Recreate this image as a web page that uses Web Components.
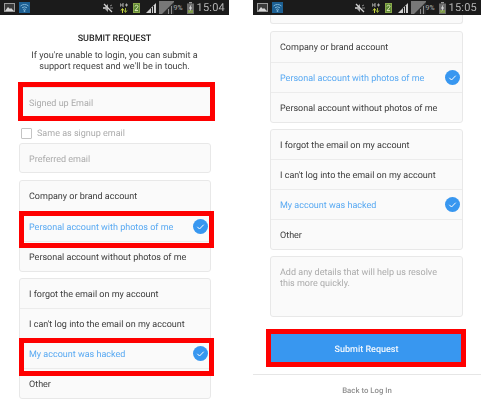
<!DOCTYPE html>
<html>
<head>
<meta charset="utf-8">
<title>Submit Request</title>
<style>
  html, body { margin: 0; padding: 0; background: #fff; }
  body { width: 481px; height: 405px; overflow: hidden; font-family: Roboto, "Liberation Sans", sans-serif; text-rendering: geometricPrecision; }
  .phones { display: flex; height: 405px; }
  phone-panel:first-child { width: 229px; margin-right: 24px; }
  phone-panel:last-child { width: 228px; }
</style>
</head>
<body>
<div class="phones">
  <phone-panel>
    <status-bar time="15:04"></status-bar>
    <form-intro title="SUBMIT REQUEST">If you're unable to login, you can submit a<br>support request and we'll be in touch.</form-intro>
    <red-frame inset="-5px -4px -4px -1px" style="margin:14px 18px 0 19px">
      <text-field height="30">Signed up Email</text-field>
    </red-frame>
    <check-line>Same as signup email</check-line>
    <text-field height="30" style="margin:0 18px 0 19px">Preferred email</text-field>
    <option-card style="margin:7px 18px 0 19px">
      <option-row first>Company or brand account</option-row>
      <red-frame inset="0 -4px -7.400px -1px">
        <option-row selected>Personal account with photos of me</option-row>
      </red-frame>
      <option-row>Personal account without photos of me</option-row>
    </option-card>
    <option-card style="margin:6px 18px 0 19px">
      <option-row first>I forgot the email on my account</option-row>
      <option-row>I can't log into the email on my account</option-row>
      <red-frame inset="0 -4px -7.400px -1px">
        <option-row selected>My account was hacked</option-row>
      </red-frame>
      <option-row>Other</option-row>
    </option-card>
  </phone-panel>
  <phone-panel>
    <status-bar time="15:05"></status-bar>
    <option-card cut style="margin:0 18px 0 17px;height:9px"></option-card>
    <option-card style="margin:7px 18px 0 17px">
      <option-row first>Company or brand account</option-row>
      <option-row selected>Personal account with photos of me</option-row>
      <option-row>Personal account without photos of me</option-row>
    </option-card>
    <option-card style="margin:6px 18px 0 17px">
      <option-row first>I forgot the email on my account</option-row>
      <option-row>I can't log into the email on my account</option-row>
      <option-row selected>My account was hacked</option-row>
      <option-row>Other</option-row>
    </option-card>
    <text-field multiline height="61" style="margin:6px 18px 0 17px">Add any details that will help us resolve<br>this more quickly.</text-field>
    <red-frame inset="-4px -3px -4px -4px" style="margin:16px 18px 0 17px">
      <submit-button>Submit Request</submit-button>
    </red-frame>
    <back-link>Back to Log In</back-link>
  </phone-panel>
</div>

<script>
const FONT = `Roboto, "Liberation Sans", sans-serif`;

class PhonePanel extends HTMLElement {
  constructor() {
    super();
    this.attachShadow({ mode: "open" });
  }

  connectedCallback() {
    this.shadowRoot.innerHTML = `
      <style>
        :host { display: block; height: 405px; overflow: hidden; filter: blur(.3px); }
        .body { display: flex; flex-direction: column; }
      </style>
      <div class="body"><slot></slot></div>
    `;
  }
}

class StatusBar extends HTMLElement {
  constructor() {
    super();
    this.attachShadow({ mode: "open" });
  }

  get time() {
    return this.getAttribute("time") || "";
  }

  connectedCallback() {
    this.shadowRoot.innerHTML = `
      <style>
        :host { display: flex; align-items: center; height: 15px; background: #1b1b1b; color: #b4b4b4; font-family: ${FONT}; }
        svg { display: block; flex: none; }
        .spacer { flex: 1; }
        .pct { font-size: 7px; width: 11px; }
        .time { font-size: 11px; letter-spacing: .2px; margin-left: 3px; margin-right: 4px; }
      </style>
      <svg style="margin-left:4px" width="11" height="9" viewBox="0 0 11 9"><rect width="11" height="9" fill="#9a9a9a"/><rect x="1" y="1" width="9" height="7" fill="#3a3a3a"/><path d="M1 8l3-4 2 2 1-1 3 3z" fill="#d5d5d5"/></svg>
      <svg style="margin-left:4px" width="11" height="11" viewBox="0 0 11 11"><rect width="11" height="11" fill="#1c5f92"/><path d="M1.500 4a6 6 0 0 1 8 0M3 5.800a4 4 0 0 1 5 0M4.200 7.500a2 2 0 0 1 2.600 0" fill="none" stroke="#7fb4d6" stroke-width="1"/><circle cx="5.500" cy="9" r=".9" fill="#7fb4d6"/></svg>
      <span class="spacer"></span>
      <svg width="10" height="10" viewBox="0 0 10 10"><path d="M0 4h2l3-3v8L2 6H0z" fill="#a8a8a8"/><path d="M1 1l8 8" stroke="#d0d0d0" stroke-width="1.200"/><path d="M7 3l2-1M7 5h3" stroke="#8a8a8a"/></svg>
      <svg style="margin-left:7px" width="8" height="11" viewBox="0 0 8 11"><path d="M0 1v4M3 1v4M0 3h3M5 3h3M6.500 1.500v3" stroke="#b0b0b0" fill="none"/><path d="M2.500 11V7M1 8.500l1.500-2 1.500 2" stroke="#c9d63f" fill="none"/><path d="M5.500 6v4M4 8.500l1.500 2 1.500-2" stroke="#9ab03a" fill="none"/></svg>
      <svg style="margin-left:5px" width="7" height="10" viewBox="0 0 7 10"><rect width="7" height="10" fill="#8aa84a"/><rect x="1" y="1" width="5" height="8" fill="#5e8a36"/><path d="M2 3.500a1.500 1.300 0 1 1 2.500 1L2 7.600h3" fill="none" stroke="#dfe9b8" stroke-width="1"/></svg>
      <svg style="margin-left:6px" width="10" height="10" viewBox="0 0 10 10"><path d="M0 10L10 0v10z" fill="#cfcfcf"/><path d="M5 5h1v5H5zM7 3h1v7H7z" fill="#1b1b1b"/></svg>
      <svg style="margin-left:3px" width="15" height="13" viewBox="0 0 15 13"><rect width="15" height="13" fill="#777"/><path d="M3 13L15 1v12z" fill="#2a2a2a"/><path d="M9 8h1v5H9zM12 5h1v8h-1z" fill="#8f8f8f"/></svg>
      <span class="pct">9%</span>
      <svg style="margin-left:2px" width="7" height="12" viewBox="0 0 7 12"><rect x="2" width="3" height="1.500" fill="#999"/><rect y="1.500" width="7" height="10.500" fill="#6b6b6b"/><rect x="1" y="8" width="5" height="3" fill="#7f9a4a"/><path d="M4.500 2L2 6.500h1.500L2.500 10 5 5.500H3.500z" fill="#f0f0f0"/></svg>
      <span class="time">${this.time}</span>
    `;
  }
}

class FormIntro extends HTMLElement {
  constructor() {
    super();
    this.attachShadow({ mode: "open" });
  }

  connectedCallback() {
    this.shadowRoot.innerHTML = `
      <style>
        :host { display: block; text-align: center; padding-top: 19px; color: #444; }
        h1 { margin: 0; font: 500 9px/11px ${FONT}; color: #262626; }
        p { margin: 6px 0 0; font: 400 9.1px/11px ${FONT}; }
      </style>
      <h1>${this.getAttribute("title")}</h1>
      <p><slot></slot></p>
    `;
  }
}

class RedFrame extends HTMLElement {
  constructor() {
    super();
    this.attachShadow({ mode: "open" });
  }

  get inset() {
    return this.getAttribute("inset") || "-5px";
  }

  connectedCallback() {
    this.shadowRoot.innerHTML = `
      <style>
        :host { display: block; position: relative; }
        i { position: absolute; inset: ${this.inset}; border: 5px solid #fe0000; pointer-events: none; }
      </style>
      <slot></slot>
      <i></i>
    `;
  }
}

class TextField extends HTMLElement {
  constructor() {
    super();
    this.attachShadow({ mode: "open" });
  }

  connectedCallback() {
    const multiline = this.hasAttribute("multiline");
    const h = this.getAttribute("height") || "30";
    this.shadowRoot.innerHTML = `
      <style>
        :host { display: block; box-sizing: border-box; height: ${h}px; background: #fafafa; border: 1px solid #e8e8e8; border-radius: 3px; color: #ababab; font: 400 9px/11px ${FONT}; }
        div { padding: ${multiline ? "11px 9px 0" : "2px 9px 0"}; ${multiline ? "" : `line-height: ${h - 2}px;`} }
      </style>
      <div><slot></slot></div>
    `;
  }
}

class CheckLine extends HTMLElement {
  constructor() {
    super();
    this.attachShadow({ mode: "open" });
  }

  connectedCallback() {
    this.shadowRoot.innerHTML = `
      <style>
        :host { display: flex; align-items: center; gap: 5px; box-sizing: border-box; height: 26px; padding-top: 7px; margin-left: 21px; color: #ababab; font: 400 9px/11px ${FONT}; }
        span { box-sizing: border-box; width: 11px; height: 11px; border: 1px solid #c4c4c4; background: #fff; border-radius: 1px; }
        b { font-weight: 400; padding-top: 2px; }
      </style>
      <span></span><b><slot></slot></b>
    `;
  }
}

class OptionCard extends HTMLElement {
  constructor() {
    super();
    this.attachShadow({ mode: "open" });
  }

  connectedCallback() {
    const cut = this.hasAttribute("cut");
    this.shadowRoot.innerHTML = `
      <style>
        :host { display: block; box-sizing: border-box; background: #fafafa; border: 1px solid #e8e8e8; ${cut ? "border-top: 0;" : ""} border-radius: ${cut ? "0 0 3px 3px" : "3px"}; }
      </style>
      <slot></slot>
    `;
  }
}

class OptionRow extends HTMLElement {
  constructor() {
    super();
    this.attachShadow({ mode: "open" });
  }

  connectedCallback() {
    const selected = this.hasAttribute("selected");
    const first = this.hasAttribute("first");
    this.shadowRoot.innerHTML = `
      <style>
        :host { display: flex; align-items: center; justify-content: space-between; box-sizing: border-box; height: ${first ? "29.6px" : "30px"}; padding: 0 2px 0 9px; ${first ? "" : "border-top: 1px solid #ececec;"} color: ${selected ? "#58a9f2" : "#3c3c3c"}; font: 400 9px/11px ${FONT}; }
        span { padding-top: 4px; }
        svg { display: block; }
      </style>
      <span><slot></slot></span>
      ${selected ? `<svg width="15" height="15" viewBox="0 0 15 15"><circle cx="7.500" cy="7.500" r="7.500" fill="#3897f0"/><path d="M4.300 7.800l2.200 2.200 4.200-4.300" fill="none" stroke="#fff" stroke-width="1"/></svg>` : ""}
    `;
  }
}

class SubmitButton extends HTMLElement {
  constructor() {
    super();
    this.attachShadow({ mode: "open" });
  }

  connectedCallback() {
    this.shadowRoot.innerHTML = `
      <style>
        :host { display: flex; align-items: center; justify-content: center; box-sizing: border-box; height: 30px; padding-top: 4px; background: #3897f0; color: #f4f9fe; font: 500 9px/11px ${FONT}; }
      </style>
      <slot></slot>
    `;
  }
}

class BackLink extends HTMLElement {
  constructor() {
    super();
    this.attachShadow({ mode: "open" });
  }

  connectedCallback() {
    this.shadowRoot.innerHTML = `
      <style>
        :host { display: block; margin-top: 11px; padding-top: 10px; border-top: 1px solid #e6e6e6; text-align: center; color: #8f8f8f; font: 500 7.8px/11px ${FONT}; }
      </style>
      <slot></slot>
    `;
  }
}

customElements.define("phone-panel", PhonePanel);
customElements.define("status-bar", StatusBar);
customElements.define("form-intro", FormIntro);
customElements.define("red-frame", RedFrame);
customElements.define("text-field", TextField);
customElements.define("check-line", CheckLine);
customElements.define("option-card", OptionCard);
customElements.define("option-row", OptionRow);
customElements.define("submit-button", SubmitButton);
customElements.define("back-link", BackLink);
</script>
</body>
</html>
